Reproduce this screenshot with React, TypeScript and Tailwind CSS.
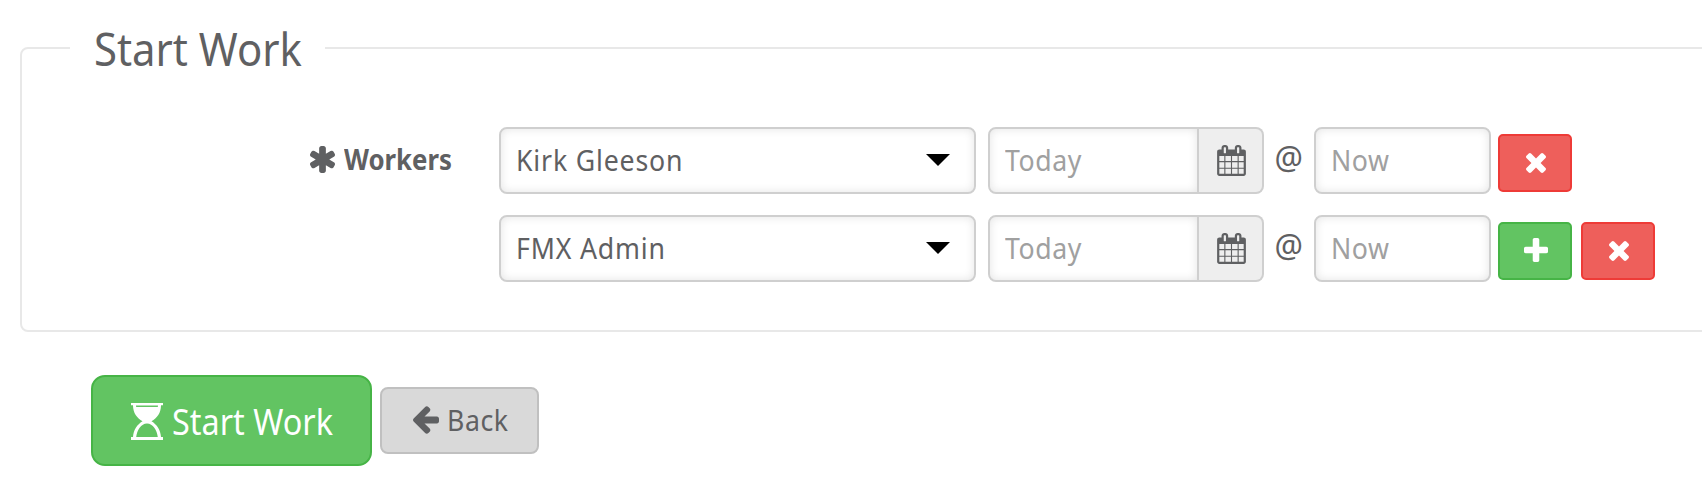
import type { ReactNode } from 'react'
import clsx from 'clsx'

type IconProps = {
  viewBox: string
  path: string
  className?: string
}

type Worker = {
  name: string
  canAdd: boolean
}

const workers: Worker[] = [
  { name: 'Kirk Gleeson', canAdd: false },
  { name: 'FMX Admin', canAdd: true },
]

const icons = {
  times: {
    viewBox: '302 366 1188 1188',
    path: 'M1490 1322q0 40-28 68l-136 136q-28 28-68 28t-68-28l-294-294-294 294q-28 28-68 28t-68-28l-136-136q-28-28-28-68t28-68l294-294-294-294q-28-28-28-68t28-68l136-136q28-28 68-28t68 28l294 294 294-294q28-28 68-28t68 28l136 136q28 28 28 68t-28 68l-294 294 294 294q28 28 28 68z',
  },
  plus: {
    viewBox: '192 128 1408 1408',
    path: 'M1600 736v192q0 40-28 68t-68 28h-416v416q0 40-28 68t-68 28h-192q-40 0-68-28t-28-68v-416h-416q-40 0-68-28t-28-68v-192q0-40 28-68t68-28h416v-416q0-40 28-68t68-28h192q40 0 68 28t28 68v416h416q40 0 68 28t28 68z',
  },
  asterisk: {
    viewBox: '182 128 1428 1536',
    path: 'M1546 1050q46 26 59.5 77.5t-12.5 97.5l-64 110q-26 46-77.5 59.5t-97.5-12.5l-266-153v307q0 52-38 90t-90 38h-128q-52 0-90-38t-38-90v-307l-266 153q-46 26-97.5 12.5t-77.5-59.5l-64-110q-26-46-12.5-97.5t59.5-77.5l266-154-266-154q-46-26-59.5-77.5t12.5-97.5l64-110q26-46 77.5-59.5t97.5 12.5l266 153v-307q0-52 38-90t90-38h128q52 0 90 38t38 90v307l266-153q46-26 97.5-12.5t77.5 59.5l64 110q26 46 12.5 97.5t-59.5 77.5l-266 154z',
  },
  arrowLeft: {
    viewBox: '192 180 1472 1560',
    path: 'M1664 896v128q0 53-32.5 90.5t-84.5 37.5h-704l293 294q38 36 38 90t-38 90l-75 76q-37 37-90 37-52 0-91-37l-651-652q-37-37-37-90 0-52 37-91l651-650q38-38 91-38 52 0 90 38l75 74q38 38 38 91t-38 91l-293 293h704q52 0 84.5 37.5t32.5 90.5z',
  },
  calendar: {
    viewBox: '64 0 1664 1792',
    path: 'M192 1664h288v-288h-288v288zm352 0h320v-288h-320v288zm-352-352h288v-320h-288v320zm352 0h320v-320h-320v320zm-352-384h288v-288h-288v288zm736 736h320v-288h-320v288zm-384-736h320v-288h-320v288zm768 736h288v-288h-288v288zm-384-352h320v-320h-320v320zm-352-864v-288q0-13-9.5-22.5t-22.5-9.5h-64q-13 0-22.5 9.5t-9.5 22.5v288q0 13 9.5 22.5t22.5 9.5h64q13 0 22.5-9.5t9.5-22.5zm736 864h288v-320h-288v320zm-384-384h320v-288h-320v288zm384 0h288v-288h-288v288zm32-480v-288q0-13-9.5-22.5t-22.5-9.5h-64q-13 0-22.5 9.5t-9.5 22.5v288q0 13 9.5 22.5t22.5 9.5h64q13 0 22.5-9.5t9.5-22.5zm384-64v1280q0 52-38 90t-90 38h-1408q-52 0-90-38t-38-90v-1280q0-52 38-90t90-38h128v-96q0-66 47-113t113-47h64q66 0 113 47t47 113v96h384v-96q0-66 47-113t113-47h64q66 0 113 47t47 113v96h128q52 0 90 38t38 90z',
  },
}

function Icon({ viewBox, path, className }: IconProps) {
  return (
    <svg viewBox={viewBox} className={clsx('shrink-0 fill-current', className)} aria-hidden="true">
      <path d={path} />
    </svg>
  )
}

function Hourglass() {
  return (
    <svg viewBox="0 0 32 37" className="mt-0.5 h-[37px] w-8 shrink-0 fill-current" aria-hidden="true">
      <path
        fillRule="evenodd"
        d="M0 0h32v2.200h-2C30 10 26 15 20.500 18.200 26 21.500 29.500 27 30 34h2v3H0v-3h2c.5-7 4-12.500 9.500-15.800C6 15 2 10 2 2.200H0zM5 2.500l.2 1.400h21.600l.2-1.400zM5.200 34h21.600C26 27 22 20.500 16 20.500S6 27 5.200 34z"
      />
    </svg>
  )
}

function Field({ className, children }: { className?: string; children: ReactNode }) {
  return (
    <div
      className={clsx(
        'flex h-[67px] shrink-0 items-center border-2 border-[#cfcfcf] bg-white pl-[15px] shadow-[inset_0_0_10px_rgba(0,0,0,0.11)]',
        className,
      )}
    >
      {children}
    </div>
  )
}

function IconButton({ color, children, label }: { color: 'red' | 'green'; children: ReactNode; label: string }) {
  return (
    <button
      type="button"
      aria-label={label}
      className={clsx(
        'mt-[7px] flex h-[58px] w-[74px] shrink-0 items-center justify-center rounded-[5px] border-2 text-white',
        color === 'red' ? 'border-[#ee3b37] bg-[#ee5f5b]' : 'border-[#46b446] bg-[#62c462]',
      )}
    >
      {children}
    </button>
  )
}

function WorkerRow({ worker }: { worker: Worker }) {
  return (
    <div className="flex h-[67px] items-start">
      <Field className="w-[477px] justify-between rounded-lg pr-6">
        <span className="mb-[3px] origin-left scale-x-[0.92] tracking-[0.9px] whitespace-nowrap">{worker.name}</span>
        <svg viewBox="0 0 24 12" className="mb-0.5 h-3 w-6 fill-black" aria-hidden="true">
          <path d="M0 0h24L12 12z" />
        </svg>
      </Field>
      <Field className="ml-3 w-[211px] rounded-l-lg text-[#a0a0a0]">
        <span className="mb-[3px] origin-left scale-x-[0.92] tracking-[0.6px]">Today</span>
      </Field>
      <div className="flex h-[67px] w-[65px] shrink-0 items-center justify-center rounded-r-lg border-2 border-l-0 border-[#cfcfcf] bg-[#eee]">
        <Icon {...icons.calendar} className="mb-px ml-px h-[31px] w-[29px]" />
      </div>
      <span className="flex h-[61px] w-[50px] shrink-0 items-center justify-center text-[33px]">
        <span className="scale-x-[0.96]">@</span>
      </span>
      <Field className="w-[177px] rounded-lg text-[#a0a0a0]">
        <span className="mb-[3px] origin-left scale-x-[0.92] tracking-[0.6px]">Now</span>
      </Field>
      <div className="ml-[7px] flex gap-[9px]">
        {worker.canAdd && (
          <IconButton color="green" label="Add worker">
            <Icon {...icons.plus} className="mb-0.5 ml-0.5 size-6" />
          </IconButton>
        )}
        <IconButton color="red" label="Remove worker">
          <Icon {...icons.times} className="ml-0.5 size-5" />
        </IconButton>
      </div>
    </div>
  )
}

export default function App() {
  return (
    <main className="h-[494px] overflow-hidden bg-white font-['Noto_Sans',sans-serif] text-[29px] leading-none text-[#5f6062]">
      <fieldset className="mt-5 ml-5 h-[312px] w-[1720px] rounded-lg border-2 border-[#e8e8e8]">
        <legend className="ml-12 h-14 w-[255px] pl-6 text-[46px] leading-[56px] whitespace-nowrap">
          <span className="inline-block origin-left scale-x-[0.91]">Start Work</span>
        </legend>
        <div className="flex pt-[51px]">
          <div className="flex h-[65px] w-[477px] shrink-0 items-center pl-[288px] font-bold">
            <Icon {...icons.asterisk} className="h-[27px] w-[25px]" />
            <span className="mb-0.5 ml-[9px] origin-left scale-x-[0.89]">Workers</span>
          </div>
          <div className="flex flex-col gap-[21px]">
            {workers.map((worker) => (
              <WorkerRow key={worker.name} worker={worker} />
            ))}
          </div>
        </div>
      </fieldset>

      <div className="mt-[43px] ml-[91px] flex items-center gap-2">
        <button
          type="button"
          className="flex h-[91px] w-[281px] items-center rounded-[14px] border-2 border-[#46b446] bg-[#62c462] pl-[38px] text-[36px] whitespace-nowrap text-white"
        >
          <Hourglass />
          <span className="mt-0.5 ml-[9px] origin-left scale-x-[0.9]">Start Work</span>
        </button>
        <button
          type="button"
          className="flex h-[67px] w-[159px] items-center rounded-lg border-2 border-[#c0c0c0] bg-[#d9d9d9] pl-[31px]"
        >
          <Icon {...icons.arrowLeft} className="mb-0.5 h-7 w-[26px]" />
          <span className="mb-[3px] ml-2 origin-left scale-x-[0.92] tracking-[0.6px]">Back</span>
        </button>
      </div>
    </main>
  )
}
